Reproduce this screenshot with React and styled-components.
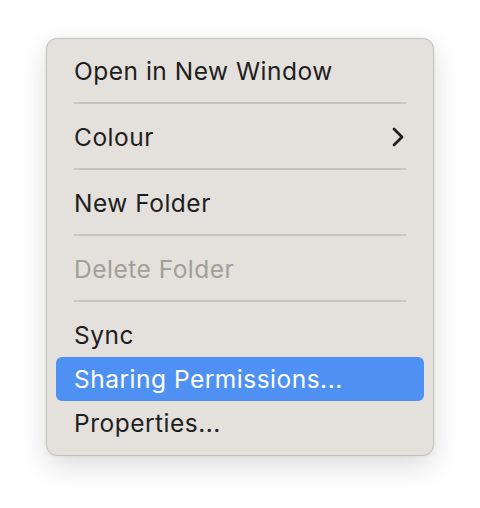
import React from 'react';
import styled, { createGlobalStyle } from 'styled-components';

const GlobalStyle = createGlobalStyle`
  html, body {
    margin: 0;
    padding: 0;
    background: #ffffff;
  }
  body {
    font-family: Inter, 'Noto Sans', 'Liberation Sans', sans-serif;
  }
`;

const Page = styled.div`
  width: 480px;
  height: 508px;
  padding: 38px 0 0 46px;
  box-sizing: border-box;
`;

const Menu = styled.div`
  width: 388px;
  box-sizing: border-box;
  padding: 10px 9px;
  background: #e4e0dc;
  border: 1px solid #c4c0bc;
  border-radius: 11px;
  box-shadow: 0 10px 28px rgba(0, 0, 0, 0.14), 0 0 4px rgba(0, 0, 0, 0.06);
  display: flex;
  flex-direction: column;
`;

const Item = styled.div`
  height: 44px;
  display: flex;
  align-items: center;
  justify-content: space-between;
  padding: 0 20px 0 18px;
  border-radius: 6px;
  font-size: 24.5px;
  letter-spacing: 0.5px;
  color: ${props => (props.disabled ? '#a29e9b' : props.active ? '#ffffff' : '#1e1e1e')};
  background: ${props => (props.active ? '#4f91f2' : 'transparent')};
`;

const Separator = styled.div`
  height: 22px;
  display: flex;
  align-items: center;
  padding: 0 18px;

  &::after {
    content: '';
    flex: 1;
    height: 2px;
    margin-top: -2px;
    background: #c8c3bf;
  }
`;

const Chevron = () => (
  <svg width="12" height="20" viewBox="0 0 12 20">
    <path d="M2 2 L10 10 L2 18" fill="none" stroke="#1e1e1e" strokeWidth="2.8" strokeLinecap="round" strokeLinejoin="round" />
  </svg>
);

function App() {
  return (
    <Page>
      <GlobalStyle />
      <Menu>
        <Item>Open in New Window</Item>
        <Separator />
        <Item>
          Colour
          <Chevron />
        </Item>
        <Separator />
        <Item>New Folder</Item>
        <Separator />
        <Item disabled>Delete Folder</Item>
        <Separator />
        <Item>Sync</Item>
        <Item active>Sharing Permissions...</Item>
        <Item>Properties...</Item>
      </Menu>
    </Page>
  );
}

export default App;
